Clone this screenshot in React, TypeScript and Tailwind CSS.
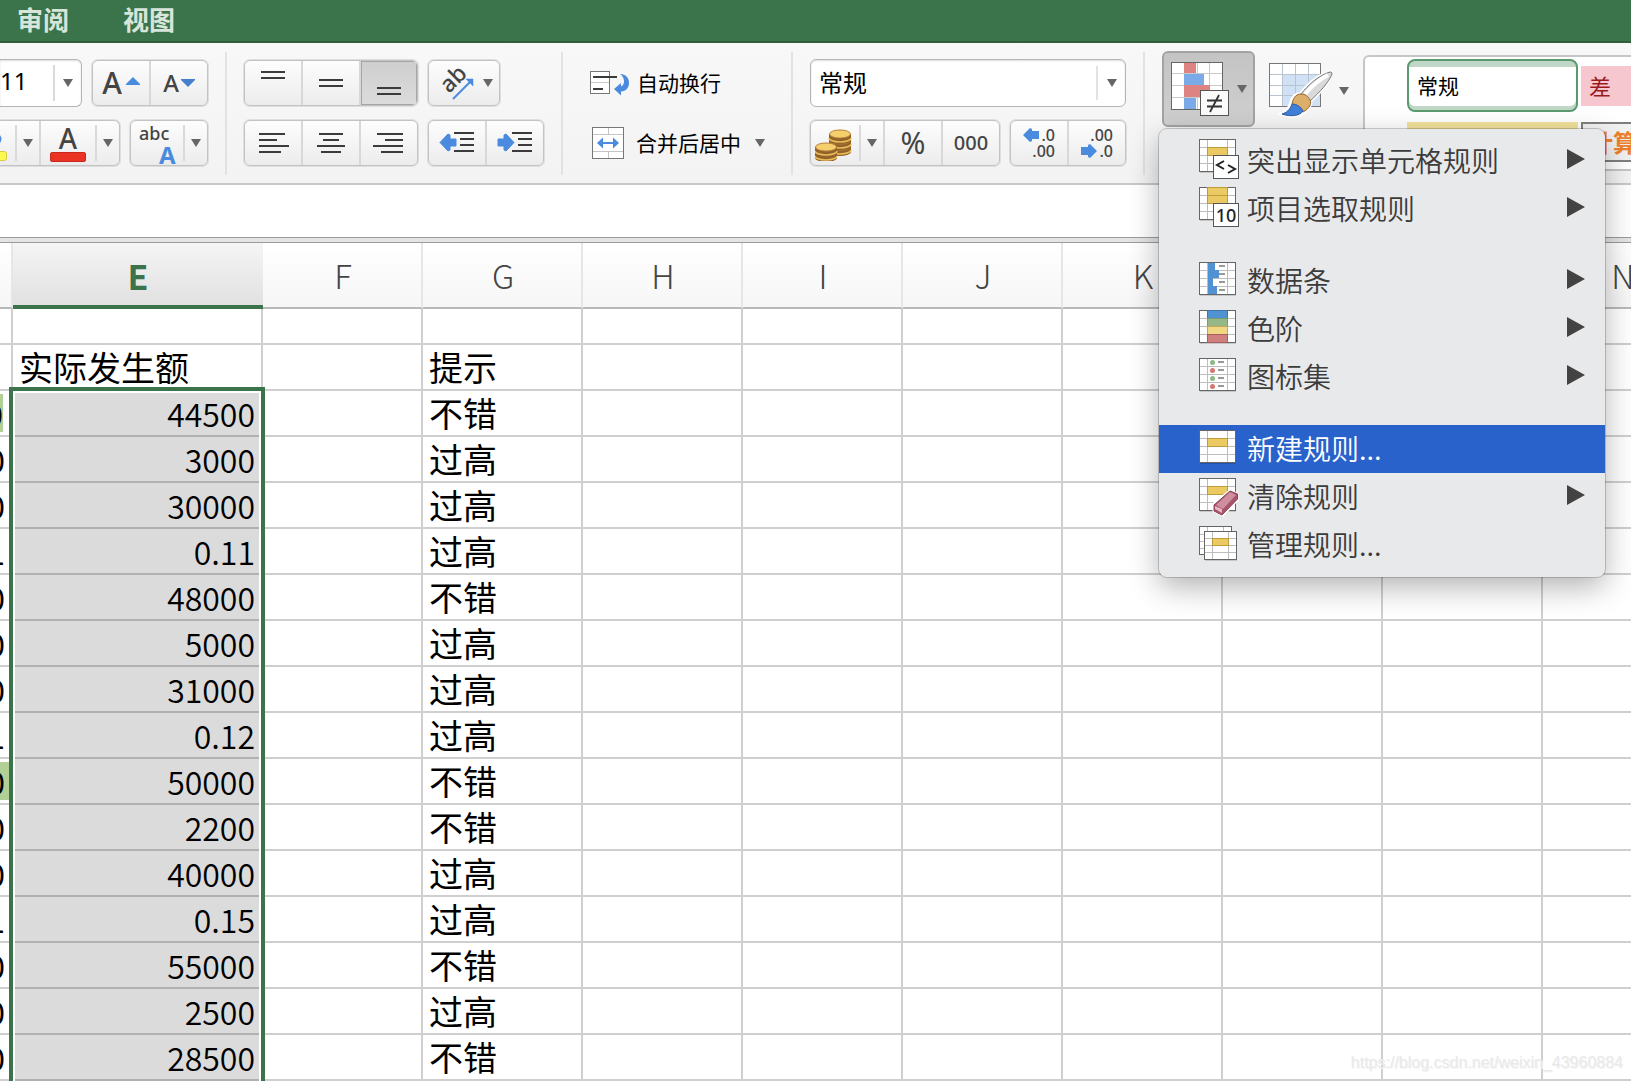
import React from 'react';

const BLUE = '#4a8be0';

const Caret = () => (
  <svg width="10" height="8" viewBox="0 0 10 8" className="shrink-0">
    <path d="M0 0H10L5 8Z" fill="#666" />
  </svg>
);

const Separator = () => <div className="mx-[17px] -mt-2 h-[123px] w-0.5 shrink-0 bg-[#e2e2e2]" />;

const Group = ({ className = '', children }: { className?: string; children: React.ReactNode }) => (
  <div
    className={`flex h-[46px] shrink-0 overflow-hidden rounded-md border border-[#c3c3c3] bg-linear-to-b from-[#fdfdfd] to-[#ececec] shadow-[0_0_0_1px_#dedede] ${className}`}
  >
    {children}
  </div>
);

interface ToolProps {
  label: string;
  className?: string;
  active?: boolean;
  children: React.ReactNode;
}

const Tool = ({ label, className = '', active, children }: ToolProps) => (
  <button
    type="button"
    aria-label={label}
    aria-pressed={active}
    className={`flex flex-1 items-center justify-center border-l-2 border-[#d8d8d8] first:border-l-0 ${active ? 'bg-linear-to-b from-[#cecece] to-[#dcdcdc] shadow-[inset_0_0_0_1px_#a5a5a5]' : ''} ${className}`}
  >
    {children}
  </button>
);

const DropTool = ({ label, className = '' }: { label: string; className?: string }) => (
  <button type="button" aria-label={label} className={`my-1 flex shrink-0 items-center justify-center border-l-2 border-[#dadada] ${className}`}>
    <Caret />
  </button>
);

const Lines = ({ rows }: { rows: [number, number, number][] }) => (
  <svg width="32" height="30" viewBox="0 0 32 30">
    {rows.map(([x, y, w]) => (
      <rect key={y} x={x} y={y} width={w} height="2" fill="#3b3b3b" />
    ))}
  </svg>
);

const vertical: { label: string; rows: [number, number, number][] }[] = [
  { label: '顶端对齐', rows: [[4, 3, 24], [4, 9, 24]] },
  { label: '垂直居中', rows: [[4, 11, 24], [4, 17, 24]] },
  { label: '底端对齐', rows: [[4, 19, 24], [4, 25, 24]] },
];

const horizontal: { label: string; rows: [number, number, number][] }[] = [
  { label: '左对齐', rows: [[2, 5, 26], [2, 11, 18], [2, 17, 30], [2, 23, 22]] },
  { label: '居中', rows: [[4, 5, 24], [8, 11, 16], [2, 17, 28], [6, 23, 20]] },
  { label: '右对齐', rows: [[4, 5, 26], [12, 11, 18], [0, 17, 30], [8, 23, 22]] },
];

const IndentIcon = ({ right }: { right?: boolean }) => (
  <svg width="36" height="24" viewBox="0 0 36 24">
    <path
      d={right ? 'M1 8H7V4L9 3L17 11.500L9 20L7 19V15H1Z' : 'M17 8H11V4L9 3L1 11.500L9 20L11 19V15H17Z'}
      fill={BLUE}
      stroke={BLUE}
      strokeLinejoin="round"
    />
    <g fill="#3b3b3b">
      <rect x="15" y="1" width="20" height="2" />
      <rect x="21" y="7" width="14" height="2" />
      <rect x="21" y="13" width="14" height="2" />
      <rect x="15" y="19" width="20" height="2" />
    </g>
  </svg>
);

const WrapIcon = () => (
  <svg width="40" height="26" viewBox="0 0 40 26">
    <rect x="0.500" y="1.500" width="19" height="22" fill="#fff" stroke="#777" />
    <path d="M1 12.500H19" stroke="#ccc" />
    <path d="M3 7H27M3 19H13" stroke="#3b3b3b" strokeWidth="2" />
    <path d="M30 4C36 4 39 8 39 13C39 18 36 21 31 21.500V25.500L24 19L31 13V16.500C35 15 35.500 8 30 4Z" fill={BLUE} />
  </svg>
);

const MergeIcon = () => (
  <svg width="32" height="32" viewBox="0 0 32 32">
    <rect x="0.500" y="0.500" width="31" height="31" fill="#fff" stroke="#777" />
    <path d="M1 7.500H31M1 24.500H31M16.500 1V7M16.500 25V31" stroke="#c4c4c4" />
    <path d="M5 16L11 10.500V15H21V10.500L27 16L21 21.500V17H11V21.500Z" fill={BLUE} />
  </svg>
);

const Coin = ({ x, y }: { x: number; y: number }) => (
  <g>
    <path d={`M${x} ${y}v6a11 4 0 0 0 22 0v-6Z`} fill="#93622a" />
    <path d={`M${x} ${y + 4}a11 4 0 0 0 22 0`} fill="none" stroke="#e9bd59" strokeWidth="1.500" />
    <ellipse cx={x + 11} cy={y} rx="10.500" ry="4" fill="#f4cf6c" stroke="#b5823a" />
  </g>
);

const CoinsIcon = () => (
  <svg width="37" height="32" viewBox="0 0 37 32">
    <Coin x={14} y={17} />
    <Coin x={14} y={11} />
    <Coin x={14} y={5} />
    <Coin x={0} y={23} />
    <Coin x={0} y={18} />
  </svg>
);

const SmallArrow = ({ right }: { right?: boolean }) => (
  <svg width="16" height="14" viewBox="0 0 16 14">
    <path d={right ? 'M0 3H7V1L9 0L16 7L9 14L7 13V11H0Z' : 'M16 3H9V1L7 0L0 7L7 14L9 13V11H16Z'} fill={BLUE} />
  </svg>
);

const ConditionalIcon = () => (
  <svg width="60" height="56" viewBox="0 0 60 56">
    <rect x="1.500" y="1.500" width="51" height="47" fill="#fff" stroke="#666" />
    <path d="M14.500 2V48M27.500 2V48M39.500 2V48M2 12.500H52M2 24.500H52M2 36.500H52" stroke="#c9c9c9" />
    <path d="M14 2H26V12H14ZM14 24H40V36H14Z" fill="#dd8482" />
    <path d="M14 13H34V24H14ZM14 37H26V48H14Z" fill="#7aabe8" />
    <rect x="30.500" y="29.500" width="28" height="25" fill="#fafafa" stroke="#555" />
    <path d="M37 39.500H52M37 45.500H52M49 34L40 51" stroke="#333" strokeWidth="1.800" />
  </svg>
);

const BrushIcon = () => (
  <svg width="64" height="56" viewBox="0 0 64 56">
    <rect x="0.500" y="0.500" width="51" height="43" fill="#fff" stroke="#777" />
    <path d="M14 12H51V43H14Z" fill="#d0e1f6" />
    <path d="M13.500 1V43M26.500 1V43M39.500 1V43M1 11.500H51M1 22.500H51M1 32.500H51" stroke="#b9c4d1" />
    <path d="M62 9C50 12 38 22 32 31C25 31 23 36 22 41C20 46 17 49 13 51C22 54 33 53 36 47C41 44 42 40 41 38C50 30 60 19 62 9Z" fill="#fff" stroke="#fff" strokeWidth="4" />
    <path d="M61 9C50 12 39 22 32 31L41 38C51 29 60 19 63 11Q63 8.500 61 9Z" fill="#d9d9d9" stroke="#777" />
    <path d="M59 12C51 16 42 24 36 31" fill="none" stroke="#fff" strokeWidth="4" />
    <path d="M32 31C26 31 24 36 23 41C27 42 31 44 34 49C40 46 43 41 41 37C39 33 36 31 32 31Z" fill="#dcae6a" stroke="#96672d" />
    <path d="M23 41C21 47 17 50 13 51C21 54 31 53 34 48C32 44 28 41 23 41Z" fill="#3f7fd8" stroke="#2b5ca8" />
  </svg>
);

// Small sheet drawn at (x, y), shared by every entry of the rules menu
const Sheet = ({ x = 0, y = 3, children }: { x?: number; y?: number; children?: React.ReactNode }) => (
  <g transform={`translate(${x} ${y})`}>
    <rect x="1" y="2" width="36" height="32" fill="#000" opacity="0.15" />
    <rect x="0.500" y="0.500" width="36" height="32" fill="#fff" stroke="#666" />
    <path d="M8.500 1V32M28.500 1V32M1 8.500H36M1 16.500H36M1 24.500H36" stroke="#bdbdbd" />
    {children}
  </g>
);

const Gold = ({ y, height = 8 }: { y: number; height?: number }) => (
  <rect x="8.500" y={y} width="20" height={height} fill="#ebca64" stroke="#c09b3a" />
);

const icons: Record<string, React.ReactNode> = {
  highlight: (
    <>
      <Sheet y={0}><Gold y={8.5} /></Sheet>
      <rect x="14.500" y="16.500" width="25" height="23" fill="#fff" stroke="#555" />
      <path d="M25 22L18 26L25 30M29 26L36 30L29 34" fill="none" stroke="#222" strokeWidth="2" />
    </>
  ),
  top: (
    <>
      <Sheet y={0}><Gold y={0.5} /><Gold y={8.5} /></Sheet>
      <rect x="14.500" y="16.500" width="25" height="23" fill="#fff" stroke="#555" />
      <text x="27" y="35" textAnchor="middle" fontSize="18" fontFamily="Noto Sans, sans-serif" fontWeight="500" fill="#222">10</text>
    </>
  ),
  bars: (
    <Sheet>
      <path d="M9 1H16V8H20V16H14V24H18V32H9Z" fill="#5192d3" />
      <path d="M20 4H26M20 12H26M20 20H26M20 28H26" stroke="#999" strokeWidth="2" />
    </Sheet>
  ),
  scales: (
    <Sheet>
      <rect x="8.500" y="0.500" width="20" height="8" fill="#5192d3" stroke="#3f75ad" />
      <rect x="8.500" y="8.500" width="20" height="8" fill="#96b888" stroke="#799a6b" />
      <rect x="8.500" y="16.500" width="20" height="8" fill="#efd783" stroke="#c3a94e" />
      <rect x="8.500" y="24.500" width="20" height="8" fill="#cf807e" stroke="#a85f5d" />
    </Sheet>
  ),
  iconSet: (
    <Sheet>
      <path d="M19 4H25M19 12H25M19 20H25M19 28H25" stroke="#999" strokeWidth="2" />
      <circle cx="13.500" cy="4.500" r="2.500" fill="#8fb983" />
      <circle cx="13.500" cy="12.500" r="2.500" fill="#d07876" />
      <circle cx="13.500" cy="20.500" r="2.500" fill="#8fb983" />
      <circle cx="13.500" cy="28.500" r="2.500" fill="#d07876" />
    </Sheet>
  ),
  create: <Sheet><Gold y={8.5} /></Sheet>,
  clear: (
    <>
      <Sheet><Gold y={8.5} /></Sheet>
      <path d="M31 16L38 19V25L24 40L15 36V29Z" fill="#fff" stroke="#fff" strokeWidth="3" />
      <path d="M31 16L38.500 19V24L23 40L15 36V30Z" fill="#a8546b" stroke="#8f4258" strokeLinejoin="round" />
      <path d="M31 17L37 20L24 34L17 30Z" fill="#cf8fa0" />
      <path d="M16 31L23 34V38L16 34Z" fill="#e3b6c1" />
    </>
  ),
  manage: (
    <>
      <rect x="0.500" y="3.500" width="32" height="28" fill="#fff" stroke="#666" />
      <path d="M8.500 4V9M24.500 4V9M1 11.500H5M1 18.500H5M1 25.500H5" stroke="#bdbdbd" />
      <rect x="6" y="10" width="32" height="28" fill="#000" opacity="0.15" />
      <rect x="5.500" y="8.500" width="32" height="28" fill="#fff" stroke="#666" />
      <path d="M13.500 9V36M29.500 9V36M6 15.500H37M6 22.500H37M6 29.500H37" stroke="#bdbdbd" />
      <rect x="13.500" y="15.500" width="16" height="7" fill="#ebca64" stroke="#c09b3a" />
    </>
  ),
};

interface MenuEntry {
  icon: string;
  label: string;
  submenu?: boolean;
  selected?: boolean;
}

const menu: MenuEntry[][] = [
  [
    { icon: 'highlight', label: '突出显示单元格规则', submenu: true },
    { icon: 'top', label: '项目选取规则', submenu: true },
  ],
  [
    { icon: 'bars', label: '数据条', submenu: true },
    { icon: 'scales', label: '色阶', submenu: true },
    { icon: 'iconSet', label: '图标集', submenu: true },
  ],
  [
    { icon: 'create', label: '新建规则...', selected: true },
    { icon: 'clear', label: '清除规则', submenu: true },
    { icon: 'manage', label: '管理规则...' },
  ],
];

const RulesMenu = () => (
  <div
    role="menu"
    className="absolute top-full -left-[3px] z-20 mt-0.5 flex w-[446px] flex-col gap-6 rounded-lg bg-[#e8e9ea] py-2 shadow-[0_0_0_1px_rgba(0,0,0,0.18),0_10px_30px_rgba(0,0,0,0.3)]"
  >
    {menu.map((section, i) => (
      <div key={i}>
        {section.map((entry) => (
          <button
            key={entry.icon}
            type="button"
            role="menuitem"
            className={`flex h-12 w-full items-center gap-2 pr-5 pl-10 text-left text-[28px] leading-10 font-[350] ${entry.selected ? 'bg-[#2962ca] text-white' : 'text-[#3c3c3c]'}`}
          >
            <svg width="40" height="44" viewBox="0 0 40 44" className="shrink-0">{icons[entry.icon]}</svg>
            <span className="flex-1 pb-0.5">{entry.label}</span>
            {entry.submenu && (
              <svg width="18" height="24" viewBox="0 0 18 24">
                <path d="M0 0V20L18 10Z" fill="#434343" />
              </svg>
            )}
          </button>
        ))}
      </div>
    ))}
  </div>
);

const Ribbon = () => (
  <div className="relative z-10 flex h-[142px] items-start border-b-2 border-[#c8c8c8] bg-linear-to-b from-[#f8f8f8] to-[#f3f3f3] pt-[17px] text-black">
    <div className="flex shrink-0 flex-col gap-3.5">
      <div className="flex h-[46px] items-center gap-2.5">
        <div className="flex h-12 w-[82px] items-center rounded-r-md border border-l-0 border-[#b5b5b5] bg-white shadow-[inset_0_1px_2px_#ddd]">
          <input aria-label="字号" defaultValue="11" className="w-[53px] bg-transparent pb-1 font-['Noto_Sans'] text-2xl outline-none" />
          <DropTool label="选择字号" className="h-9 flex-1" />
        </div>
        <Group className="w-[116px]">
          <Tool label="增大字号" className="gap-1">
            <span className="font-['Noto_Sans'] text-3xl font-medium text-[#444]">A</span>
            <svg width="14" height="12" viewBox="0 0 14 12"><path d="M0 8V7L7 0L14 7V8Z" fill={BLUE} /></svg>
          </Tool>
          <Tool label="减小字号" className="gap-0.5">
            <span className="font-['Noto_Sans'] text-2xl font-medium text-[#444]">A</span>
            <svg width="14" height="8" viewBox="0 0 14 8"><path d="M0 0H14V1L7 8L0 1Z" fill="#4480cc" /></svg>
          </Tool>
        </Group>
      </div>
      <div className="flex gap-2.5">
        <Group className="w-[120px] rounded-l-none border-l-0">
          <button type="button" aria-label="填充颜色" className="flex w-[15px] shrink-0 flex-col justify-end pb-1">
            <svg width="8" height="26" viewBox="0 0 8 26">
              <path d="M0 0L1.500 3Q1.500 6 0 8Z" fill={BLUE} />
              <path d="M-4 16.500H4.500Q6.500 16.500 6.500 18.500V23.500Q6.500 25.500 4.500 25.500H-4Z" fill="#fdf84f" stroke="#d5cf3a" />
            </svg>
          </button>
          <DropTool label="选择填充颜色" className="w-6" />
          <Tool label="字体颜色" className="flex-col">
            <span className="font-['Noto_Sans'] text-[28px] leading-7 font-medium text-[#444]">A</span>
            <span className="h-2.5 w-9 rounded-xs border border-[#c92a1e] bg-[#e93323]" />
          </Tool>
          <DropTool label="选择字体颜色" className="w-6" />
        </Group>
        <Group className="w-[78px]">
          <button type="button" aria-label="文本效果" className="flex flex-1 flex-col items-start pl-2 font-['Noto_Sans']">
            <span className="text-lg leading-6 font-medium text-[#444]">abc</span>
            <span className="ml-5 text-2xl leading-5 font-bold text-[#4a8be0]">A</span>
          </button>
          <DropTool label="选择文本效果" className="w-6" />
        </Group>
      </div>
    </div>

    <Separator />

    <div className="flex shrink-0 flex-col gap-3.5">
      <div className="flex gap-2.5">
        <Group className="w-[174px]">
          {vertical.map((tool, i) => (
            <Tool key={tool.label} label={tool.label} active={i === 2}><Lines rows={tool.rows} /></Tool>
          ))}
        </Group>
        <Group className="w-[72px]">
          <Tool label="方向" className="gap-2 pl-1">
            <svg width="36" height="36" viewBox="0 0 36 36">
              <text x="10" y="29" fontSize="23" fontFamily="Noto Sans, sans-serif" fontWeight="500" fill="#444" transform="rotate(-45 10 29)">ab</text>
              <path d="M14 34L31 17" stroke={BLUE} strokeWidth="2" />
              <path d="M34 14V21L27 14Z" fill={BLUE} stroke={BLUE} strokeWidth="0.500" />
            </svg>
            <Caret />
          </Tool>
        </Group>
      </div>
      <div className="flex gap-2.5">
        <Group className="w-[174px]">
          {horizontal.map((tool) => (
            <Tool key={tool.label} label={tool.label}><Lines rows={tool.rows} /></Tool>
          ))}
        </Group>
        <Group className="w-[116px]">
          <Tool label="减少缩进"><IndentIcon /></Tool>
          <Tool label="增加缩进"><IndentIcon right /></Tool>
        </Group>
      </div>
    </div>

    <Separator />

    <div className="flex w-[194px] shrink-0 flex-col gap-3.5 pl-2.5 text-[21px]">
      <button type="button" className="flex h-[46px] items-center gap-[7px]">
        <WrapIcon />
        自动换行
      </button>
      <div className="flex h-[46px] items-center gap-3.5">
        <button type="button" className="flex items-center gap-3 pl-0.5">
          <MergeIcon />
          合并后居中
        </button>
        <button type="button" aria-label="合并选项"><Caret /></button>
      </div>
    </div>

    <Separator />

    <div className="flex w-[316px] shrink-0 flex-col gap-3.5">
      <div className="flex h-[46px] items-center">
        <div className="relative h-12 w-full rounded-md border border-[#b5b5b5] bg-white shadow-[inset_0_1px_2px_#ddd]">
          <select aria-label="数字格式" className="h-full w-full appearance-none bg-transparent px-2 pb-0.5 text-2xl outline-none">
            <option>常规</option>
          </select>
          <div className="pointer-events-none absolute inset-y-1.5 right-0 flex w-[29px] items-center justify-center border-l-2 border-[#e2e2e2]">
            <Caret />
          </div>
        </div>
      </div>
      <div className="flex justify-between font-['Noto_Sans'] text-[#444]">
        <Group className="w-[190px]">
          <button type="button" aria-label="会计数字格式" className="flex w-12 shrink-0 items-center pt-1 pl-1">
            <CoinsIcon />
          </button>
          <DropTool label="选择货币" className="w-6" />
          <Tool label="百分比" className="text-3xl">%</Tool>
          <Tool label="千位分隔" className="text-xl font-medium">000</Tool>
        </Group>
        <Group className="w-[116px] text-base font-medium">
          <Tool label="增加小数位数" className="flex-col items-end pr-3 leading-4">
            <span className="flex items-center gap-0.5"><SmallArrow />.0</span>
            <span>.00</span>
          </Tool>
          <Tool label="减少小数位数" className="flex-col items-end pr-3 leading-4">
            <span>.00</span>
            <span className="flex items-center gap-0.5"><SmallArrow right />.0</span>
          </Tool>
        </Group>
      </div>
    </div>

    <Separator />

    <div className="relative -mt-[9px] shrink-0">
      <button
        type="button"
        aria-label="条件格式"
        aria-expanded="true"
        className="flex h-[76px] w-[93px] items-center justify-between rounded-md border-2 border-[#a3a3a3] bg-linear-to-b from-[#c4c4c4] to-[#cfcfcf] px-1.5"
      >
        <ConditionalIcon />
        <Caret />
      </button>
      <RulesMenu />
    </div>
    <button type="button" aria-label="套用表格格式" className="-mt-[9px] flex h-[76px] shrink-0 items-center gap-1.5 px-3.5 pt-1">
      <BrushIcon />
      <Caret />
    </button>

    <div className="-mt-[5px] h-[116px] min-w-0 flex-1 overflow-hidden rounded-tl-md border-2 border-r-0 border-[#c6c6c6] bg-white pt-0.5 pl-[42px] text-[21px]">
      <div className="grid w-max grid-cols-[171px_171px] items-center gap-x-[3px] gap-y-2.5">
        <button type="button" className="h-[53px] rounded-lg border-2 border-[#5a9a6e] bg-linear-to-b from-[#c0d6c6] from-12% via-white via-12% to-white px-2 text-left shadow-[inset_0_-4px_0_#c0d6c6]">
          常规
        </button>
        <button type="button" className="h-10 bg-[#f6c7cf] px-2 text-left text-[22px] text-[#9a1b1e]">差</button>
        <button type="button" className="h-10 bg-[#f3e29c] px-2 text-left text-[#9c5b13]">适中</button>
        <button type="button" className="h-10 border-2 border-[#7f7f7f] bg-[#f2f2f2] px-1.5 text-left text-2xl leading-8 font-bold text-[#ee812b]">计算</button>
      </div>
    </div>
  </div>
);

const columns = ['D', 'E', 'F', 'G', 'H', 'I', 'J', 'K', 'L', 'M', 'N'];

const rows: [string, string, string][] = [
  ['0', '44500', '不错'],
  ['0', '3000', '过高'],
  ['0', '30000', '过高'],
  ['1', '0.11', '过高'],
  ['0', '48000', '不错'],
  ['0', '5000', '过高'],
  ['0', '31000', '过高'],
  ['1', '0.12', '过高'],
  ['0', '50000', '不错'],
  ['0', '2200', '不错'],
  ['0', '40000', '过高'],
  ['1', '0.15', '过高'],
  ['0', '55000', '不错'],
  ['0', '2500', '过高'],
  ['0', '28500', '不错'],
];

// fills of the highlighted cells in column D, by row index
const planFill: Record<number, string> = {
  0: 'w-[3px] bg-[#b2cf95]',
  8: 'pr-1.5 bg-[#b2cf95]',
};

const cell = 'border-r-2 border-b-2 border-[#cfcfcf] p-0';
const blanks = columns.slice(4);

const Sheet1 = () => (
  <div className="relative overflow-hidden">
    <table className="w-[1703px] table-fixed border-separate border-spacing-0 text-black">
      <colgroup>
        {columns.map((name) => (
          <col key={name} className={name === 'D' ? 'w-[13px]' : name === 'E' ? 'w-[250px]' : 'w-[160px]'} />
        ))}
      </colgroup>
      <thead>
        <tr className="h-[66px]">
          {columns.map((name) => (
            <th
              key={name}
              scope="col"
              className={
                name === 'E'
                  ? 'border-b-4 border-[#3b734a] bg-linear-to-b from-[#f5f5f5] to-[#e1e1e1] p-0 pt-1 text-[34px] leading-10 font-bold text-[#3b734a]'
                  : 'border-r-2 border-b-2 border-r-[#e6e6e6] border-b-[#b9b9b9] bg-linear-to-b from-white to-[#f6f6f6] p-0 pl-0.5 text-[33px] leading-10 font-light text-[#444]'
              }
            >
              {name === 'D' ? '' : name}
            </th>
          ))}
        </tr>
      </thead>
      <tbody>
        <tr className="h-9">
          {columns.map((name) => <td key={name} className={cell} />)}
        </tr>
        <tr className="h-[46px] text-[34px] leading-11">
          <td className={cell} />
          <td className={`${cell} pl-1.5`}>实际发生额</td>
          <td className={cell} />
          <td className={`${cell} pl-1.5`}>提示</td>
          {blanks.map((name) => <td key={name} className={cell} />)}
        </tr>
        {rows.map(([plan, actual, hint], i) => (
          <tr key={i} className="h-[46px] text-[34px] leading-11">
            <td className={cell}>
              <div className={`flex h-[38px] items-center justify-end overflow-hidden text-[32px] ${planFill[i] ?? 'pr-1.5'}`}>
                {plan}
              </div>
            </td>
            <td className={`${cell} pr-1.5 text-right text-[32px] font-[350]`}>{actual}</td>
            <td className={cell} />
            <td className={`${cell} pl-1.5`}>{hint}</td>
            {blanks.map((name) => <td key={name} className={cell} />)}
          </tr>
        ))}
      </tbody>
    </table>
    {/* selected range E3:E17 */}
    <div className="pointer-events-none absolute top-[144px] -bottom-2 left-[9px] w-64 border-4 border-[#3b734a]">
      <div className="h-full border-2 border-white bg-black/14 bg-clip-padding" />
    </div>
  </div>
);

export default function App() {
  return (
    <div className="relative min-h-screen overflow-hidden bg-white font-['Noto_Sans_CJK_SC',sans-serif]">
      <nav className="flex h-[43px] items-center gap-[54px] border-b-2 border-[#2f5f3d] bg-[#3b734a] px-[17px] pb-1 text-[26px] leading-9 font-bold text-[#d8e5db]">
        <a href="#review">审阅</a>
        <a href="#view">视图</a>
      </nav>
      <Ribbon />
      <input aria-label="编辑栏" className="block h-[52px] w-full bg-white px-3 text-2xl outline-none" />
      <div className="h-1.5 border-y border-[#9b9b9b] bg-[#e4e4e4]" />
      <Sheet1 />
      <p className="absolute right-2 bottom-1.5 font-['Liberation_Sans',sans-serif] text-base text-[#e9e9e9] [text-shadow:1px_1px_0_#f4f4f4]">
        https://blog.csdn.net/weixin_43960884
      </p>
    </div>
  );
}
